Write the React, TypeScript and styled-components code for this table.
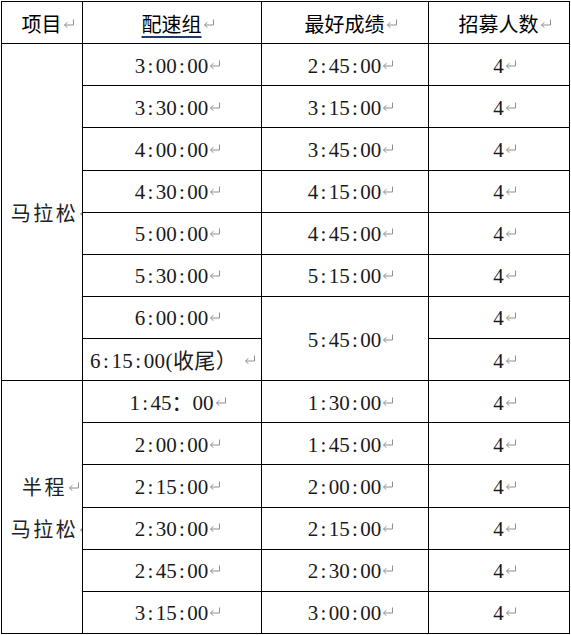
import { Fragment } from 'react';
import styled, { createGlobalStyle } from 'styled-components';

const GlobalStyle = createGlobalStyle`
   body {
      margin: 0;
      background: #fff;
   }
`;

type PaceRow = {
   pace: string;
   best?: string;
   bestSpan?: number;
   wide?: boolean;
};

const marathon: PaceRow[] = [
   { pace: '3:00:00', best: '2:45:00' },
   { pace: '3:30:00', best: '3:15:00' },
   { pace: '4:00:00', best: '3:45:00' },
   { pace: '4:30:00', best: '4:15:00' },
   { pace: '5:00:00', best: '4:45:00' },
   { pace: '5:30:00', best: '5:15:00' },
   { pace: '6:00:00', best: '5:45:00', bestSpan: 2 },
   { pace: '6:15:00(收尾）', wide: true },
];

const half: PaceRow[] = [
   { pace: '1:45：00', best: '1:30:00' },
   { pace: '2:00:00', best: '1:45:00' },
   { pace: '2:15:00', best: '2:00:00' },
   { pace: '2:30:00', best: '2:15:00' },
   { pace: '2:45:00', best: '2:30:00' },
   { pace: '3:15:00', best: '3:00:00' },
];

// half-width colons in the doc font take a full half-em, like the digits
const Time = ({ value }: { value: string }) => {
   const parts = value.split(':');
   return (
      <>
         {parts.map((p, i) => (
            <Fragment key={i}>
               {i > 0 && <Colon>:</Colon>}
               {p}
            </Fragment>
         ))}
      </>
   );
};

// the word-processor paragraph mark, hung after the text so it doesn't shift centering
const Mark = () => (
   <MarkBox>
      <svg width="12" height="9" viewBox="0 0 12 9">
         <path
            d="M10.5 0.5V6H1.5M4.5 3.2L1.5 6L4.5 8.8"
            fill="none"
            stroke="#8f8f8f"
            strokeWidth="1"
         />
      </svg>
   </MarkBox>
);

const App = () => {
   const renderGroup = (label: string[], rows: PaceRow[]) =>
      rows.map((row, i) => (
         <Row key={row.pace}>
            {i === 0 && (
               <GroupCell rowSpan={rows.length}>
                  {label.map((line) => (
                     <GroupLine key={line}>
                        {line}
                        <Mark />
                     </GroupLine>
                  ))}
               </GroupCell>
            )}
            <Cell $wide={row.wide}>
               <Time value={row.pace} />
               {row.wide && <Gap />}
               <Mark />
            </Cell>
            {row.best && (
               <Cell rowSpan={row.bestSpan}>
                  <Time value={row.best} />
                  <Mark />
               </Cell>
            )}
            <Cell>
               4<Mark />
            </Cell>
         </Row>
      ));

   return (
      <Page>
         <GlobalStyle />
         <Table>
            <colgroup>
               <col style={{ width: 81 }} />
               <col style={{ width: 179 }} />
               <col style={{ width: 167 }} />
               <col style={{ width: 141 }} />
            </colgroup>
            <thead>
               <Row>
                  <HeadCell>
                     项目<Mark />
                  </HeadCell>
                  <HeadCell>
                     <Linked>配速组</Linked>
                     <Mark />
                  </HeadCell>
                  <HeadCell>
                     最好成绩<Mark />
                  </HeadCell>
                  <HeadCell>
                     招募人数<Mark />
                  </HeadCell>
               </Row>
            </thead>
            <tbody>
               {renderGroup(['马拉松'], marathon)}
               {renderGroup(['半程', '马拉松'], half)}
            </tbody>
         </Table>
      </Page>
   );
};

export default App;

const Page = styled.div`
   padding: 1px 0 0 1px;
`;

const Table = styled.table`
   border-collapse: collapse;
   table-layout: fixed;
   width: 569px;
   font-family: 'Liberation Serif', 'Noto Sans CJK SC', serif;
   font-size: 21px;
   color: #1a1a1a;
`;

const Row = styled.tr`
   height: 42.14px;
`;

const Cell = styled.td<{ $wide?: boolean }>`
   border: 1px solid #000;
   padding: 3px 7px 0;
   text-align: ${({ $wide }) => ($wide ? 'left' : 'center')};
   letter-spacing: ${({ $wide }) => ($wide ? '0.4px' : '0')};
   vertical-align: middle;
   white-space: nowrap;
   overflow: hidden;
   line-height: 1;
`;

const HeadCell = styled(Cell).attrs({ as: 'th' })`
   font-family: 'Noto Sans CJK SC', sans-serif;
   font-weight: normal;
   font-size: 20px;
   color: #000;
`;

const GroupCell = styled(Cell)`
   padding: 0 0 0 6px;
   font-size: 20px;
   letter-spacing: 2.5px;
   color: #222;
`;

const GroupLine = styled.div`
   height: 42px;
   line-height: 46px;
`;

const Colon = styled.span`
   display: inline-block;
   width: 0.5em;
   text-align: center;
`;

const Gap = styled.span`
   display: inline-block;
   width: 6px;
`;

const Linked = styled.span`
   text-decoration: underline;
   text-decoration-color: #1f3a6b;
   text-underline-offset: 4px;
`;

const MarkBox = styled.span`
   display: inline-block;
   width: 0;
   padding-left: 1px;
   vertical-align: 4px;
   line-height: 0;

   svg {
      display: block;
   }
`;
